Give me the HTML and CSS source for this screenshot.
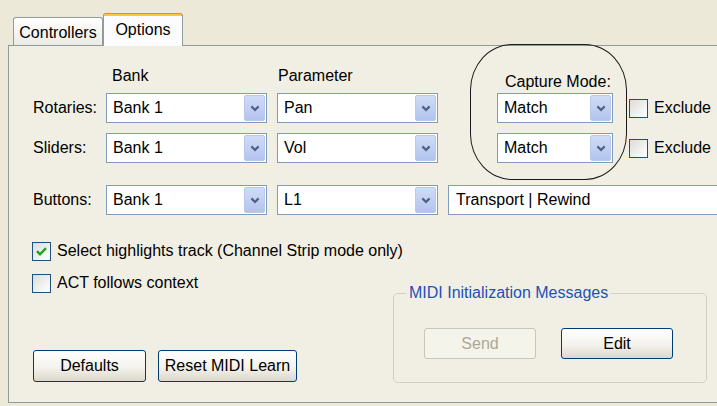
FILE: index.html
```html
<!DOCTYPE html>
<html lang="en">
<head>
	<meta charset="UTF-8">
	<title>Options</title>
	<link rel="stylesheet" href="styles.css">
</head>
<body>
	<nav class="tabs">
		<div class="tab">Controllers</div>
		<div class="tab active">Options</div>
	</nav>
	<main class="page">
		<div class="ring"></div>

		<div class="row head">
			<span class="lbl"></span>
			<span class="h-bank">Bank</span>
			<span class="h-param">Parameter</span>
			<span class="h-mode">Capture Mode:</span>
		</div>

		<div class="row">
			<span class="lbl">Rotaries:</span>
			<div class="combo">Bank 1<span class="drop"><svg width="10" height="7" viewBox="0 0 10 7"><path d="M1.4 1.4 L5 5 L8.6 1.4" fill="none" stroke="#4d6185" stroke-width="2.2"/></svg></span></div>
			<div class="combo next">Pan<span class="drop"><svg width="10" height="7" viewBox="0 0 10 7"><path d="M1.4 1.4 L5 5 L8.6 1.4" fill="none" stroke="#4d6185" stroke-width="2.2"/></svg></span></div>
			<div class="combo mode">Match<span class="drop"><svg width="10" height="7" viewBox="0 0 10 7"><path d="M1.4 1.4 L5 5 L8.6 1.4" fill="none" stroke="#4d6185" stroke-width="2.2"/></svg></span></div>
			<label class="check exclude"><span class="box"></span>Exclude</label>
		</div>

		<div class="row sliders">
			<span class="lbl">Sliders:</span>
			<div class="combo">Bank 1<span class="drop"><svg width="10" height="7" viewBox="0 0 10 7"><path d="M1.4 1.4 L5 5 L8.6 1.4" fill="none" stroke="#4d6185" stroke-width="2.2"/></svg></span></div>
			<div class="combo next">Vol<span class="drop"><svg width="10" height="7" viewBox="0 0 10 7"><path d="M1.4 1.4 L5 5 L8.6 1.4" fill="none" stroke="#4d6185" stroke-width="2.2"/></svg></span></div>
			<div class="combo mode">Match<span class="drop"><svg width="10" height="7" viewBox="0 0 10 7"><path d="M1.4 1.4 L5 5 L8.6 1.4" fill="none" stroke="#4d6185" stroke-width="2.2"/></svg></span></div>
			<label class="check exclude"><span class="box"></span>Exclude</label>
		</div>

		<div class="row buttons">
			<span class="lbl">Buttons:</span>
			<div class="combo">Bank 1<span class="drop"><svg width="10" height="7" viewBox="0 0 10 7"><path d="M1.4 1.4 L5 5 L8.6 1.4" fill="none" stroke="#4d6185" stroke-width="2.2"/></svg></span></div>
			<div class="combo next">L1<span class="drop"><svg width="10" height="7" viewBox="0 0 10 7"><path d="M1.4 1.4 L5 5 L8.6 1.4" fill="none" stroke="#4d6185" stroke-width="2.2"/></svg></span></div>
			<div class="textbox">Transport | Rewind</div>
		</div>

		<label class="check select"><span class="box"><svg width="17" height="17" viewBox="0 0 17 17"><path d="M4 8.2 L7 11.3 L13 5.2" fill="none" stroke="#21a121" stroke-width="2.4"/></svg></span>Select highlights track (Channel Strip mode only)</label>

		<div class="lower">
			<div class="left">
				<label class="check"><span class="box"></span>ACT follows context</label>
				<div class="btns">
					<div class="btn defaults">Defaults</div>
					<div class="btn reset">Reset MIDI Learn</div>
				</div>
			</div>
			<fieldset class="group">
				<legend>MIDI Initialization Messages</legend>
				<div class="grp-btns">
					<div class="btn small off">Send</div>
					<div class="btn small">Edit</div>
				</div>
			</fieldset>
		</div>
	</main>
</body>
</html>
```
FILE: styles.css
```css
/* base */
html, body {
	margin: 0px;
	height: 100%;
	overflow: hidden;
}
body {
	background-color: #ece9d8;
	color: #000;
	font: 16px/20px "Liberation Sans", Arial, sans-serif;
	width: 717px;
}

/* nav.tabs */
nav.tabs {
	display: flex;
	align-items: flex-end;
	height: 45px;
	padding-left: 13px;
}
nav.tabs .tab {
	background: linear-gradient(#ffffff, #ecebe5);
	border: 1px solid #919b9c;
	border-bottom: none;
	border-radius: 3px 3px 0px 0px;
	box-sizing: border-box;
	height: 28px;
	padding-top: 5px;
	text-align: center;
	width: 90px;
}
nav.tabs .tab.active {
	background: linear-gradient(#ffc73c 0px, #ffc73c 2px, #fcfcfe 2px);
	border-color: #919b9c;
	border-top: 1px solid #e68b2c;
	height: 33px;
	margin-bottom: -1px;
	padding-top: 6px;
	position: relative;
	width: 80px;
	z-index: 2;
}

/* main.page */
main.page {
	background-color: #f1efe3;
	border: 1px solid #919b9c;
	margin-left: 8px;
	padding: 20px 0px 19px 24px;
	position: relative;
	width: 760px;
}
main.page .ring {
	border: 1.5px solid #1a1a1a;
	border-radius: 42px / 46px;
	box-sizing: border-box;
	height: 136px;
	left: 461px;
	pointer-events: none;
	position: absolute;
	top: -2px;
	width: 157px;
	z-index: 3;
}

/* rows */
.row {
	align-items: center;
	display: flex;
	height: 30px;
}
.row.head {
	align-items: flex-start;
	height: 27px;
}
.row.sliders { margin-top: 10px; }
.row.buttons { margin-top: 22px; }

.row .lbl {
	flex: none;
	width: 73px;
}
.row .h-bank  { box-sizing: border-box; padding-left: 6px; width: 161px; }
.row .h-param { box-sizing: border-box; margin-left: 10px; padding-left: 1px; width: 161px; }
.row .h-mode  { margin-left: 59px; padding: 6px 0px 0px 8px; }

/* combo */
.combo {
	align-items: center;
	background-color: #fff;
	border: 1px solid #7f9db9;
	box-sizing: border-box;
	display: flex;
	flex: none;
	height: 30px;
	justify-content: space-between;
	padding: 0px 1px 0px 6px;
	width: 161px;
}
.combo.next { margin-left: 10px; }
.combo.mode {
	margin-left: 59px;
	width: 116px;
}
.combo .drop {
	align-items: center;
	background: linear-gradient(#d0dbf7, #b2c4ee);
	border: 1px solid #b9c8ec;
	border-radius: 2px;
	box-sizing: border-box;
	display: flex;
	height: 26px;
	justify-content: center;
	width: 21px;
}
.textbox {
	background-color: #fff;
	border: 1px solid #7f9db9;
	box-sizing: border-box;
	flex: none;
	height: 30px;
	line-height: 28px;
	margin-left: 10px;
	padding-left: 7px;
	width: 330px;
}

/* checkboxes */
.check {
	align-items: center;
	display: flex;
	gap: 6px;
	height: 20px;
	white-space: nowrap;
}
.check .box {
	background: linear-gradient(135deg, #dcdcd7, #ffffff);
	border: 1px solid #1c5180;
	box-sizing: border-box;
	flex: none;
	height: 19px;
	margin-left: -1px;
	width: 19px;
}
.check .box svg { display: block; margin: 0px; }
.check.exclude { margin-left: 16px; }
.check.exclude .box { margin-left: 0px; }
.check.select { margin-top: 26px; }

/* lower */
.lower {
	display: flex;
	margin-top: 12px;
}
.lower .left {
	flex: none;
	width: 360px;
}
.lower .btns {
	display: flex;
	gap: 12px;
	margin-top: 57px;
}

/* buttons */
.btn {
	align-items: center;
	background: linear-gradient(#ffffff, #f3f2ec 55%, #dcd8cb);
	border: 1px solid #003c74;
	border-radius: 3px;
	box-sizing: border-box;
	display: flex;
	height: 32px;
	justify-content: center;
	white-space: nowrap;
}
.btn.defaults { width: 113px; }
.btn.reset    { width: 139px; }
.btn.small {
	height: 31px;
	width: 112px;
}
.btn.off {
	background: #f5f4ea;
	border-color: #c9c7ba;
	color: #aca899;
}

/* fieldset.group */
fieldset.group {
	border: 1px solid #d0d0bf;
	border-radius: 5px;
	box-sizing: border-box;
	margin: 11px 0px 0px 0px;
	padding: 26px 0px 23px 12px;
	width: 314px;
}
fieldset.group legend {
	color: #2250b8;
	line-height: 18px;
	padding: 0px 3px;
}
fieldset.group .grp-btns {
	display: flex;
	gap: 25px;
	margin-left: 18px;
}
```
